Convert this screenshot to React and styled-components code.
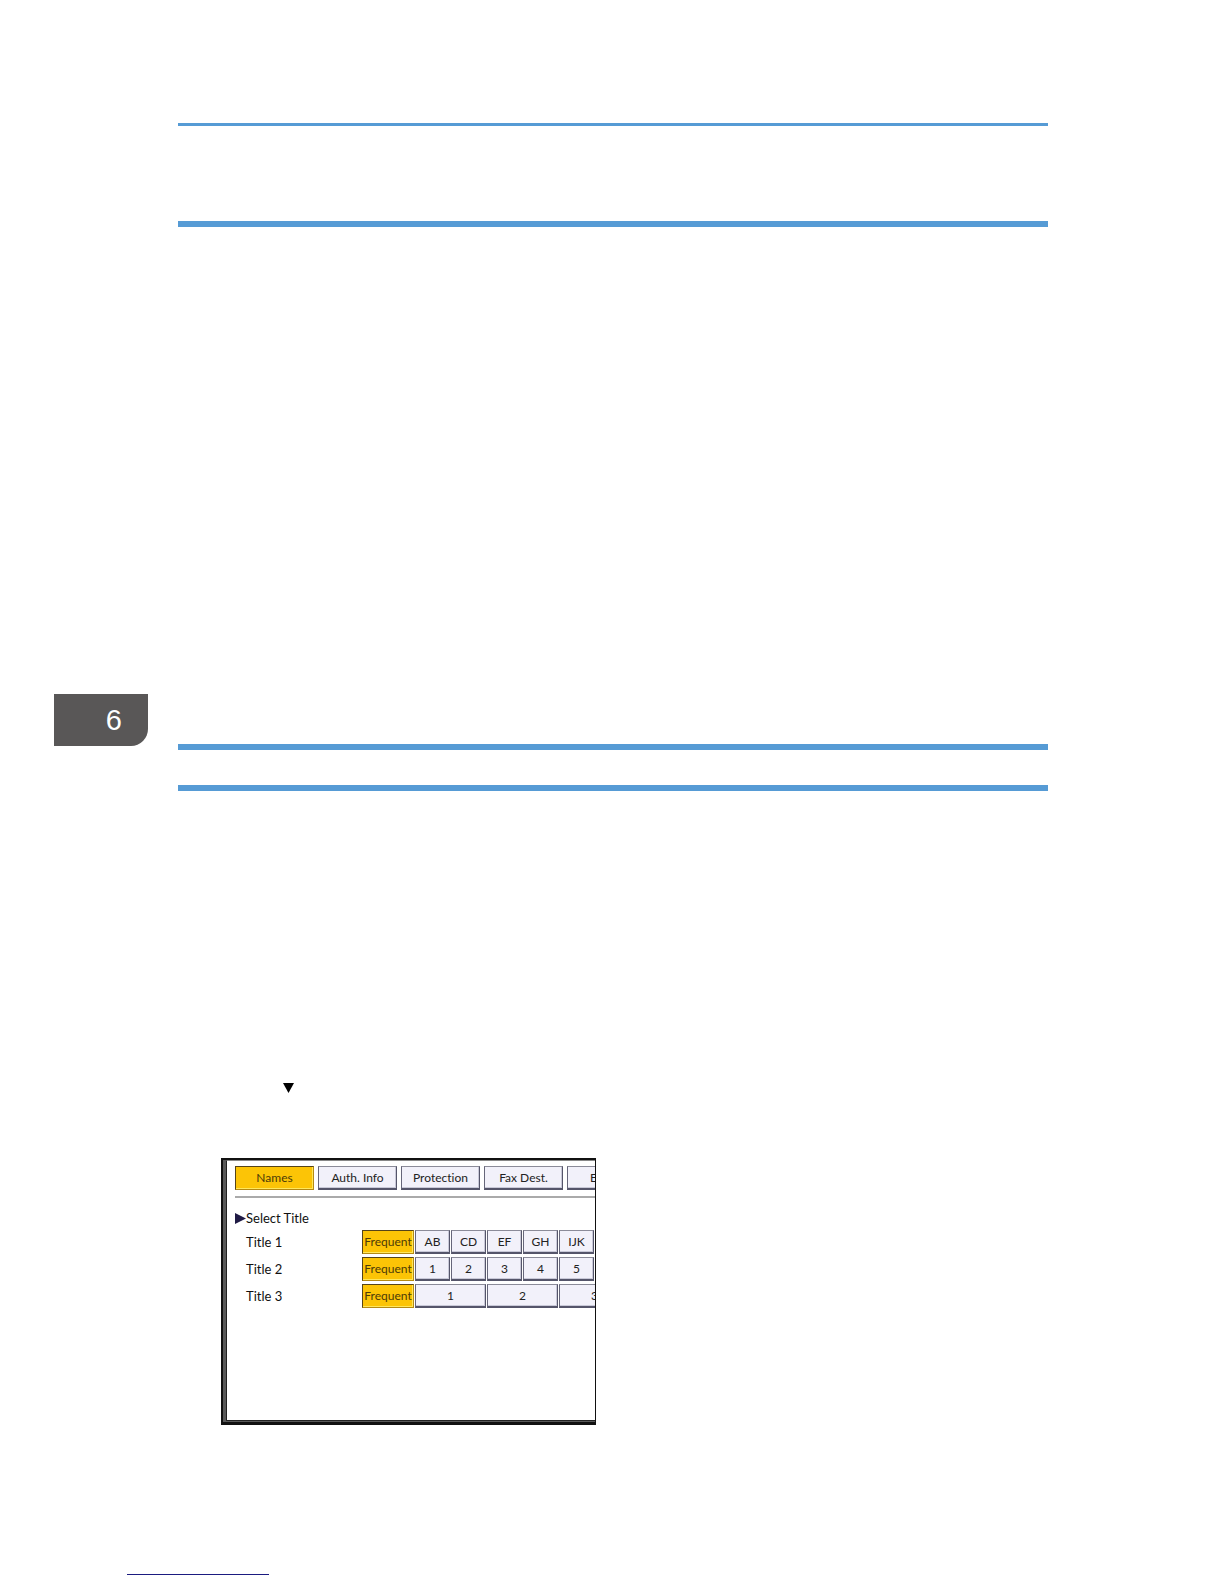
import React, { useState } from "react";
import styled, { createGlobalStyle } from "styled-components";

const GlobalStyle = createGlobalStyle`
  *, *::before, *::after { box-sizing: border-box; }
  body { margin: 0; background: #fff; }
`;

const Page = styled.div`
  display: grid;
  grid-template-columns: 178px 1fr;
  padding-bottom: 8px;
  font-family: "Liberation Sans", Arial, sans-serif;
`;

const Margin = styled.aside`
  padding: 694px 30px 0 54px;
`;

const ChapterTab = styled.div`
  display: flex;
  align-items: center;
  justify-content: flex-end;
  height: 52px;
  padding-right: 26px;
  border-bottom-right-radius: 17px;
  background: #595757;
  color: #fff;
  font-size: 29px;
  line-height: 32px;
`;

const Main = styled.main`
  min-width: 0;
  padding: 123px 176px 0 0;
`;

const Rule = styled.hr`
  height: ${(p) => p.$thickness}px;
  margin: 0 0 ${(p) => p.$after}px;
  border: 0;
  background: #569bd5;
`;

const Step = styled.section`
  padding-left: 43px;
`;

const DownMark = styled.svg`
  display: block;
  width: 11px;
  height: 10px;
  margin: 0 0 65px 62px;
`;

const Screen = styled.section`
  width: 375px;
  height: 267px;
  border: solid #111;
  border-width: 2px 1px 3px 2px;
  background: #595959;
`;

const Display = styled.div`
  height: 261px;
  margin-left: 3px;
  padding: 5px 0 0 8px;
  overflow: hidden;
  border: solid #222;
  border-width: 1px 0 1px 1px;
  border-top-color: #888;
  background: #fff;
  color: #111;
  font-family: Lato, "Liberation Sans", sans-serif;
  font-size: 13px;
  font-variant-ligatures: none;
  line-height: 18px;
`;

const Tabs = styled.nav`
  display: flex;
  gap: 4px;
  padding-bottom: 6px;
  border-bottom: 2px solid #aaa;
`;

const Key = styled.button`
  flex: none;
  width: ${(p) => p.$width}px;
  height: 24px;
  padding: 0;
  border: 1px solid;
  border-color: ${(p) => (p.$on ? "#554419 #b58a12 #b58a12 #554419" : "#8b8b99 #55556a #55556a #66667a")};
  border-bottom-width: ${(p) => (p.$on ? 1 : 2)}px;
  background: ${(p) => (p.$on ? "#fcc406" : "#f2f1fa")};
  box-shadow: ${(p) => (p.$on ? "inset -1px -1px #ffe75c" : "inset -1px -1px #c9c9d8")};
  color: ${(p) => (p.$on ? "#4c3b08" : "#222")};
  font: inherit;
  font-size: 12px;
  white-space: nowrap;
`;

const Heading = styled.h2`
  display: flex;
  align-items: center;
  margin: 11px 0 3px;
  font: inherit;
`;

const Pointer = styled.svg`
  width: 11px;
  height: 11px;
`;

const TitleRow = styled.div`
  display: grid;
  grid-template-columns: 116px 1fr;
  align-items: center;
  height: 24px;
  margin: 0 0 3px 11px;
`;

const Keys = styled.div`
  display: flex;
  gap: 1px;
`;

const Footer = styled.footer`
  grid-column: 1 / -1;
  padding: 149px 0 0 127px;
`;

const FootLine = styled.hr`
  width: 142px;
  height: 1px;
  margin: 0;
  border: 0;
  background: #1b1b80;
`;

const tabs = ["Names", "Auth. Info", "Protection", "Fax Dest.", "E-mail"];

const titles = [
  { name: "Title 1", width: 35, keys: ["AB", "CD", "EF", "GH", "IJK", ""] },
  { name: "Title 2", width: 35, keys: ["1", "2", "3", "4", "5", ""] },
  { name: "Title 3", width: 71, keys: ["1", "2", "3"] },
];

export default function App() {
  const [tab, setTab] = useState("Names");
  const [chosen, setChosen] = useState([-1, -1, -1]);
  const choose = (row, key) => setChosen(chosen.map((c, i) => (i === row ? key : c)));

  return (
    <>
      <GlobalStyle />
      <Page>
        <Margin>
          <ChapterTab>6</ChapterTab>
        </Margin>
        <Main>
          <Rule $thickness={3} $after={95} />
          <Rule $thickness={6} $after={517} />
          <Rule $thickness={6} $after={35} />
          <Rule $thickness={6} $after={292} />
          <Step>
            <DownMark viewBox="0 0 11 10" aria-hidden="true">
              <path d="M0 0h11L5.5 10z" fill="#000" />
            </DownMark>
            <Screen>
              <Display>
                <Tabs>
                  {tabs.map((t) => (
                    <Key key={t} type="button" $width={79} $on={tab === t} onClick={() => setTab(t)}>
                      {t}
                    </Key>
                  ))}
                </Tabs>
                <Heading>
                  <Pointer viewBox="0 0 11 11" aria-hidden="true">
                    <path d="M0 0L11 5.5L0 11z" fill="#201b45" />
                  </Pointer>
                  Select Title
                </Heading>
                {titles.map((row, r) => (
                  <TitleRow key={row.name}>
                    <span>{row.name}</span>
                    <Keys role="group" aria-label={row.name}>
                      <Key type="button" $width={52} $on={chosen[r] === -1} onClick={() => choose(r, -1)}>
                        Frequent
                      </Key>
                      {row.keys.map((k, i) => (
                        <Key key={i} type="button" $width={row.width} $on={chosen[r] === i} onClick={() => choose(r, i)}>
                          {k}
                        </Key>
                      ))}
                    </Keys>
                  </TitleRow>
                ))}
              </Display>
            </Screen>
          </Step>
        </Main>
        <Footer>
          <FootLine />
        </Footer>
      </Page>
    </>
  );
}
